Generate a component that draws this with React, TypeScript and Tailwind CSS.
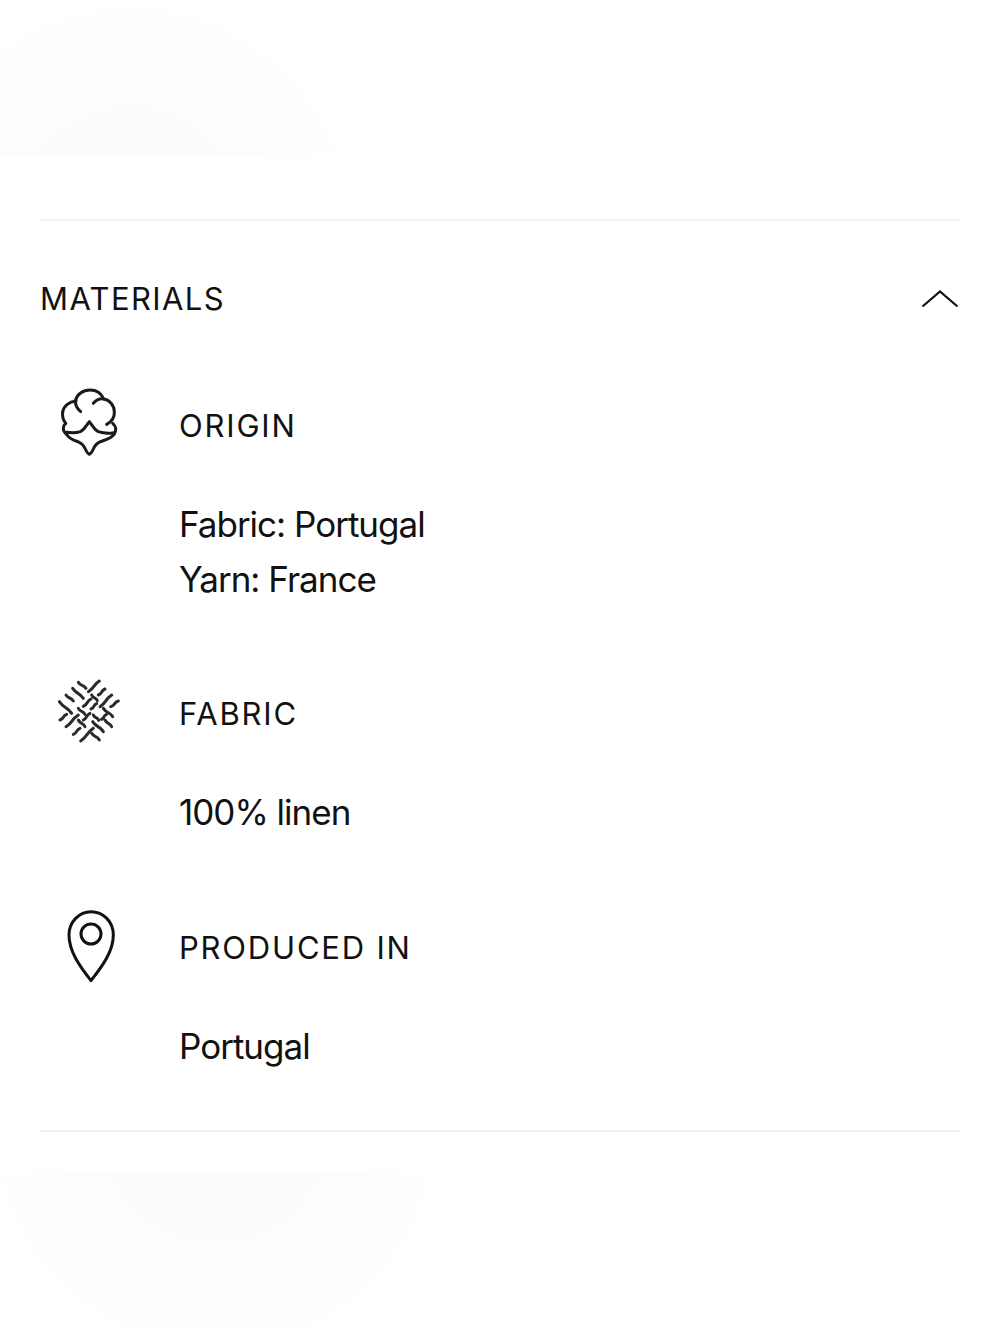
// weave strokes: x1, y1, x2, y2 in the icon's 300x285 box
const weave: number[][] = [
  [115, 52, 138, 70],
  [145, 80, 178, 48],
  [98, 70, 130, 100],
  [175, 90, 195, 72],
  [78, 90, 100, 108],
  [130, 124, 153, 102],
  [155, 90, 172, 107],
  [180, 125, 215, 90],
  [58, 110, 95, 145],
  [115, 130, 135, 148],
  [153, 132, 170, 116],
  [190, 130, 218, 155],
  [212, 125, 235, 108],
  [60, 165, 80, 148],
  [78, 185, 115, 150],
  [130, 165, 150, 145],
  [160, 150, 176, 166],
  [115, 165, 135, 185],
  [195, 165, 215, 185],
  [184, 163, 200, 148],
  [100, 208, 120, 190],
  [158, 170, 190, 200],
  [122, 228, 160, 190],
  [155, 205, 178, 225],
];

function wave([x1, y1, x2, y2]: number[]) {
  const mx = (x1 + x2) / 2;
  const my = (y1 + y2) / 2;
  const len = Math.hypot(x2 - x1, y2 - y1);
  const nx = (-(y2 - y1) / len) * 2.5;
  const ny = ((x2 - x1) / len) * 2.5;
  const qx = (x1 + mx) / 2 + nx;
  const qy = (y1 + my) / 2 + ny;
  return `M${x1} ${y1}Q${qx} ${qy} ${mx} ${my}T${x2} ${y2}`;
}

function CottonIcon() {
  return (
    <svg viewBox="0 0 300 285" className="w-[100px] h-[95px]" fill="none" stroke="#1a1a1a" strokeWidth="9" strokeLinecap="round" strokeLinejoin="round">
      <path d="M122 110c-10-8-17-20-15-34 3-17 22-31 43-31 19 0 34 10 41 27" />
      <path d="M160 85c8-9 19-15 31-13 18 3 31 18 32 38 1 14-6 29-23 38" />
      <path d="M108 78c-21 2-38 16-40 34-2 13 2 24 9 33" />
      <path d="M77 145c-9 8-11 22 3 33" />
      <path d="M218 145c11 9 12 23 4 33" />
      <path d="M80 172c14 2 28 2 41-2 12-6 18-20 27-30 9 10 15 24 27 30 15 5 31 6 47 3" />
      <path d="M80 178c7 14 22 18 36 23 11 5 16 12 20 21 3 7 7 14 12 16 5-2 9-9 12-16 4-10 10-17 21-22 15-5 33-9 41-22" />
    </svg>
  );
}

function WeaveIcon() {
  return (
    <svg viewBox="0 0 300 285" className="w-[100px] h-[95px]" fill="none" stroke="#2a2a2a" strokeWidth="9" strokeLinecap="round">
      {weave.map((s) => (
        <path key={s.join()} d={wave(s)} />
      ))}
    </svg>
  );
}

function PinIcon() {
  return (
    <svg viewBox="0 0 300 285" className="w-[100px] h-[95px]" fill="none" stroke="#111" strokeWidth="9" strokeLinejoin="round">
      <path d="M153 257C120 215 87 170 87 120 87 80 118 50 153 50c37 0 67 30 67 70 0 50-34 95-67 137Z" />
      <circle cx="153" cy="117" r="30" />
    </svg>
  );
}

function Section({ icon, iconClass, title, lines, className }: { icon: React.ReactNode; iconClass: string; title: string; lines: string[]; className: string }) {
  return (
    <div className={"flex " + className}>
      <div className={"w-[139px] shrink-0 h-[40px] " + iconClass}>{icon}</div>
      <div>
        <h3 className="text-[31px] leading-[40px] tracking-[1.8px] text-[#111] h-[40px]">{title}</h3>
        <div className="mt-[51px]">
          {lines.map((l) => (
            <p key={l} className="text-[35px] leading-[54.5px] tracking-[-1px] text-[#111]">
              {l}
            </p>
          ))}
        </div>
      </div>
    </div>
  );
}

export default function App() {
  return (
    <div className="w-[1000px] h-[1333px] overflow-hidden bg-white font-['Inter','Liberation_Sans',sans-serif]">
      {/* faint image ghost, top */}
      <div className="h-[157px] bg-[radial-gradient(circle_at_130px_225px,#fbfbfb_60px,#fcfcfc_105px,#fdfdfd_149px,#fefefe_195px,#ffffff_245px)]"></div>

      <div className="px-[40px]">
        <div className="mt-[62px] border-t-2 border-[#f1f1f1]"></div>

        <div className="flex items-center justify-between mt-[58px] h-[40px]">
          <h2 className="text-[31px] leading-[40px] tracking-[1.4px] text-[#111]">MATERIALS</h2>
          <svg viewBox="0 0 38 18" className="w-[38px] h-[18px] -translate-x-px" fill="none" stroke="#111" strokeWidth="2.2">
            <path d="M1.5 16.5 19 1.5l17.5 15" />
          </svg>
        </div>

        <Section className="mt-[87px]" iconClass="-mt-[31px]" icon={<CottonIcon />} title="ORIGIN" lines={["Fabric: Portugal", "Yarn: France"]} />
        <Section className="mt-[88px]" iconClass="-mt-[29px]" icon={<WeaveIcon />} title="FABRIC" lines={["100% linen"]} />
        <Section className="mt-[88px]" iconClass="-mt-[33px]" icon={<PinIcon />} title="PRODUCED IN" lines={["Portugal"]} />

        <div className="mt-[57px] border-t-2 border-[#f1f1f1]"></div>
      </div>

      {/* faint image ghost, bottom */}
      <div className="mt-[40px] h-[159px] bg-[radial-gradient(circle_at_215px_-44px,#fbfbfb_63px,#fcfcfc_103px,#fdfdfd_145px,#fefefe_196px,#ffffff_250px)]"></div>
    </div>
  );
}
